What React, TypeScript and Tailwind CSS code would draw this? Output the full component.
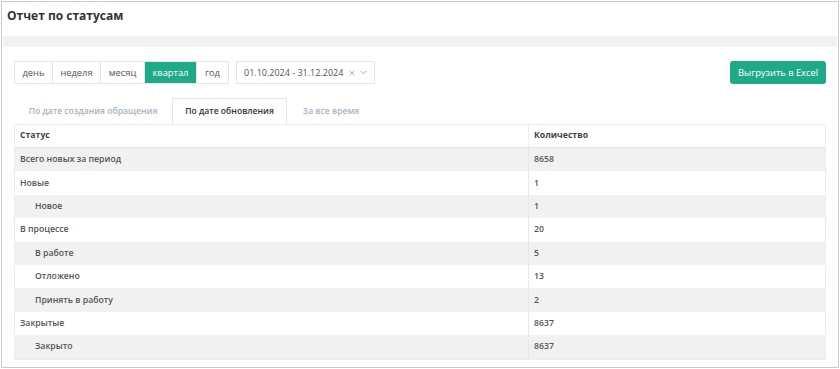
import { ChevronDown, X } from "lucide-react";

const PERIODS = ["день", "неделя", "месяц", "квартал", "год"];
const PERIOD_W = ["w-[38px]", "w-[48px]", "w-[44px]", "w-[52px]", "w-[31px]"];

const TABS = [
  { label: "По дате создания обращения", w: "w-[158px]" },
  { label: "По дате обновления", w: "w-[115px]" },
  { label: "За все время", w: "w-[88px]" },
];

const ROWS = [
  { name: "Всего новых за период", count: "8658", child: false },
  { name: "Новые", count: "1", child: false },
  { name: "Новое", count: "1", child: true },
  { name: "В процессе", count: "20", child: false },
  { name: "В работе", count: "5", child: true },
  { name: "Отложено", count: "13", child: true },
  { name: "Принять в работу", count: "2", child: true },
  { name: "Закрытые", count: "8637", child: false },
  { name: "Закрыто", count: "8637", child: true },
];

export default function App() {
  return (
    <div className="w-[840px] h-[369px] bg-white pt-[1px] pl-[1px] font-['Open_Sans',sans-serif]">
      <div className="w-[838px] h-[367px] border border-[#cacaca] flex flex-col">
        <div className="h-[34px] px-[5px] pt-[5px] text-[12px] font-bold text-[#333]">
          Отчет по статусам
        </div>
        <div className="h-[11px] mx-[1px] bg-[#f2f2f2]" />

        <div className="px-[12px] pt-[14px]">
          {/* toolbar */}
          <div className="flex h-[23px] items-stretch justify-between">
            <div className="flex items-stretch">
              <div className="flex border border-[#e6e6e6] bg-white">
                {PERIODS.map((p, i) => (
                  <div
                    key={p}
                    className={
                      "flex items-center justify-center text-[9.3px] " +
                      PERIOD_W[i] +
                      (i < PERIODS.length - 1 ? " border-r border-[#e6e6e6]" : "") +
                      (p === "квартал" ? " bg-[#1eaa88] text-white" : " text-[#555]")
                    }
                  >
                    {p}
                  </div>
                ))}
              </div>
              <div className="ml-[7px] w-[139px] flex items-center border border-[#e6e6e6] pl-[7px] pr-[5px] text-[9px] text-[#555]">
                <span className="flex-1 whitespace-nowrap">01.10.2024 - 31.12.2024</span>
                <X size={8} strokeWidth={2} className="text-[#888]" />
                <ChevronDown size={11} strokeWidth={1.5} className="ml-[2px] text-[#888]" />
              </div>
            </div>
            <div className="w-[96px] flex items-center justify-center rounded-[3px] bg-[#1eaa88] text-[9.3px] text-white">
              Выгрузить в Excel
            </div>
          </div>

          {/* tabs */}
          <div className="mt-[14px] flex h-[26px]">
            {TABS.map((t, i) => (
              <div
                key={t.label}
                className={
                  "flex items-center justify-center text-[8.6px] font-semibold " +
                  t.w +
                  (i === 1
                    ? " border border-b-0 border-[#e6e6e6] text-[#333] bg-white"
                    : " text-[#a3b3c2]")
                }
              >
                {t.label}
              </div>
            ))}
          </div>

          {/* table */}
          <div className="border border-[#ececec] text-[8.7px] text-[#555]">
            <div className="flex h-[23px] items-center font-bold text-[#444] border-b border-[#e4e4e4]">
              <div className="w-[514px] pl-[5px] h-full flex items-center border-r border-[#ececec]">Статус</div>
              <div className="pl-[5px]">Количество</div>
            </div>
            {ROWS.map((r, i) => (
              <div
                key={r.name + i}
                className={"flex h-[23.4px] items-center font-semibold " + (i % 2 === 0 ? "bg-[#f1f1f1]" : "bg-white")}
              >
                <div
                  className={
                    "w-[514px] h-full flex items-center border-r border-[#e8e8e8] " +
                    (r.child ? "pl-[20px]" : "pl-[5px]")
                  }
                >
                  {r.name}
                </div>
                <div className="pl-[5px]">{r.count}</div>
              </div>
            ))}
          </div>
        </div>
      </div>
    </div>
  );
}
